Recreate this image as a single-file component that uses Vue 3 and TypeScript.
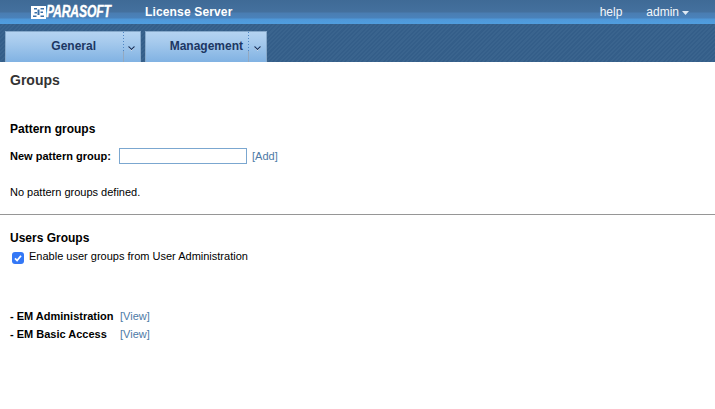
<script setup lang="ts">
const tabs = [
  { label: 'General', width: 136, labelWidth: 117, pad: 27 },
  { label: 'Management', width: 122, labelWidth: 102, pad: 5 },
]
const groups = ['EM Administration', 'EM Basic Access']
</script>

<template>
  <div class="page">
    <header class="topbar">
      <div class="brand">
        <svg class="mark" width="15" height="13" viewBox="0 0 15 13">
          <path d="M0 0h15v13H0z" fill="#fff" />
          <path d="M3 2h3v1.500H3zM9.500 2H13v1.500H9.500zM6.500 3.500H8.500V9H6.500zM3.500 6H6v1.500H3.500zM9.500 5.500H12V7H9.500zM2 9.500H5.500V11H2zM9.500 9.500H13V11H9.500z" fill="#3a70a8" />
        </svg>
        <span class="logo">PARASOFT</span>
      </div>
      <span class="product">License Server</span>
      <nav class="user">
        <span class="help">help</span>
        <span class="admin">admin</span>
        <svg class="caret" width="7" height="4" viewBox="0 0 7 4"><path d="M0 0h7L3.500 4z" fill="#dfe9f4" /></svg>
      </nav>
    </header>

    <div class="tabs">
      <div v-for="tab in tabs" :key="tab.label" class="tab" :style="{ width: tab.width + 'px' }">
        <span class="tab-label" :style="{ width: tab.labelWidth + 'px', paddingRight: tab.pad + 'px' }">{{ tab.label }}</span>
        <span class="tab-sep"></span>
        <span class="tab-arrow">
          <svg width="7" height="5" viewBox="0 0 7 5">
            <path d="M0.500 1.500 3.500 4.500 6.500 1.500" fill="none" stroke="#e8f1fa" stroke-width="1" />
            <path d="M0.500 0.500 3.500 3.500 6.500 0.500" fill="none" stroke="#1c3763" stroke-width="1.100" />
          </svg>
        </span>
      </div>
    </div>

    <main class="content">
      <h1 class="title">Groups</h1>

      <section class="pattern">
        <h2 class="heading">Pattern groups</h2>
        <div class="new-row">
          <label class="new-label" for="pg">New pattern group:</label>
          <input id="pg" class="new-input" type="text" />
          <a class="link">[Add]</a>
        </div>
        <p class="empty">No pattern groups defined.</p>
      </section>

      <hr class="rule" />

      <section class="users">
        <h2 class="heading">Users Groups</h2>
        <label class="check-row">
          <span class="check">
            <svg width="12" height="12" viewBox="0 0 12 12"><path d="M3 6.300 5.100 8.500 9 3.700" fill="none" stroke="#fff" stroke-width="1.800" /></svg>
          </span>
          <span>Enable user groups from User Administration</span>
        </label>
        <ul class="group-list">
          <li v-for="g in groups" :key="g" class="group">
            <span class="group-name">- {{ g }}</span>
            <a class="link">[View]</a>
          </li>
        </ul>
      </section>
    </main>
  </div>
</template>

<style>
html, body { margin: 0; background: #fff; overflow: hidden; }
</style>

<style scoped>
.page {
  width: 715px;
  height: 409px;
  font-family: "Liberation Sans", Arial, sans-serif;
  font-size: 11px;
  color: #000;
  background: #fff;
  display: flex;
  flex-direction: column;
}
.topbar {
  height: 24px;
  box-sizing: border-box;
  display: flex;
  align-items: center;
  color: #fff;
  background: linear-gradient(to bottom, #3f6a96 0, #44709e 12px, #4a7db2 13px, #4a82bb 18px, #4f97d8 19px, #509edf 24px);
}
.brand {
  display: flex;
  align-items: center;
  margin-left: 31px;
  width: 114px;
  height: 24px;
}
.mark { flex: none; }
.logo {
  font-size: 16px;
  font-weight: 700;
  font-style: italic;
  letter-spacing: -0.2px;
  line-height: 24px;
  -webkit-text-stroke: 0.4px #fff;
  transform: scaleX(0.76);
  transform-origin: left;
  white-space: nowrap;
}
.product {
  font-size: 12px;
  font-weight: 700;
  letter-spacing: 0.15px;
}
.user {
  margin-left: auto;
  display: flex;
  align-items: center;
  font-size: 12px;
  color: #f3f7fb;
  padding-right: 26px;
}
.help { margin-right: 24px; }
.caret { margin-left: 3px; margin-top: 1px; }
.tabs {
  height: 38px;
  box-sizing: border-box;
  padding: 7px 0 0 5px;
  display: flex;
  gap: 4px;
  background-color: #345e89;
  background-image: repeating-linear-gradient(135deg, #345e89 0, #345e89 1.500px, #3a648e 1.500px, #3a648e 3px);
}
.tab {
  height: 31px;
  box-sizing: border-box;
  border: 1px solid #86a9cb;
  border-bottom: 0;
  display: flex;
  background: linear-gradient(to bottom, #b4d3f1 0, #a6caed 10px, #7fb1e2 31px);
}
.tab-label {
  flex: none;
  text-align: right;
  box-sizing: border-box;
  padding-top: 7px;
  font-size: 12px;
  font-weight: 700;
  color: #1c3763;
  display: block;
  line-height: 15px;
}
.tab-sep {
  flex: none;
  width: 1px;
  height: 30px;
  background:
    repeating-linear-gradient(to bottom, #4f86c4 0, #4f86c4 1px, transparent 1px, transparent 3px) top / 1px 19px no-repeat,
    linear-gradient(to bottom, transparent 19px, #93a9c1 19px);
}
.tab-arrow {
  flex: 1;
  display: flex;
  justify-content: center;
  padding: 14px 1px 0 0;
  box-sizing: border-box;
}
.tab-arrow svg { display: block; }
.content { flex: 1; }
.title {
  margin: 10px 0 0 10px;
  font-size: 14px;
  line-height: 16px;
  font-weight: 700;
  color: #333;
}
.pattern { padding: 34px 10px 0; }
.heading {
  margin: 0;
  font-size: 12px;
  line-height: 14px;
  font-weight: 700;
  color: #000;
}
.new-row {
  display: flex;
  align-items: center;
  margin-top: 12px;
  height: 16px;
}
.new-label {
  font-weight: 700;
  width: 109px;
}
.new-input {
  width: 128px;
  height: 16px;
  box-sizing: border-box;
  border: 1px solid #7ba7d0;
  margin: 0 5px 0 0;
  padding: 0;
  background: #fff;
  outline: none;
}
.link { color: #4d7aa6; }
.empty {
  margin: 22px 0 0;
  line-height: 13px;
}
.rule {
  margin: 15px 0 0;
  border: 0;
  height: 1px;
  background: #969696;
}
.users { padding: 16px 10px 0; }
.check-row {
  display: flex;
  margin-top: 5px;
  line-height: 13px;
  margin-left: 2px;
  gap: 5px;
}
.check {
  width: 12px;
  height: 12px;
  margin-top: 2px;
  border-radius: 3px;
  background: #3478f6;
  display: block;
}
.check svg { display: block; }
.group-list {
  list-style: none;
  margin: 43px 0 0;
  padding: 0;
}
.group {
  display: flex;
  height: 18px;
  line-height: 18px;
}
.group-name {
  width: 110px;
  font-weight: 700;
}
</style>
